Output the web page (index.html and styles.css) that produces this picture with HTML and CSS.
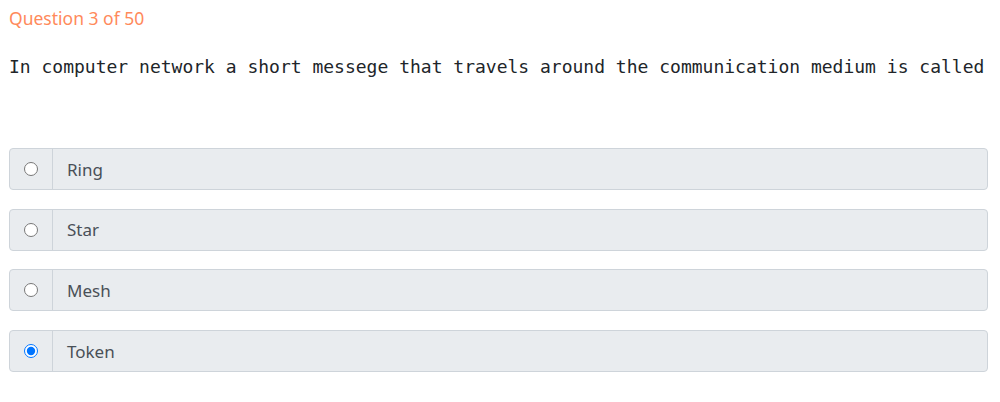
FILE: index.html
```html
<!DOCTYPE html>
<html>
<head>
<meta charset="utf-8">
<link rel="stylesheet" href="styles.css">
</head>
<body>
<div class="quiz">
  <div class="counter">Question 3 of 50</div>
  <pre class="question">In computer network a short messege that travels around the communication medium is called</pre>
  <div class="options">
    <label class="option">
      <span class="radio-cell"><input type="radio" name="q3"></span>
      <span class="label">Ring</span>
    </label>
    <label class="option">
      <span class="radio-cell"><input type="radio" name="q3"></span>
      <span class="label">Star</span>
    </label>
    <label class="option">
      <span class="radio-cell"><input type="radio" name="q3"></span>
      <span class="label">Mesh</span>
    </label>
    <label class="option">
      <span class="radio-cell"><input type="radio" name="q3" checked></span>
      <span class="label">Token</span>
    </label>
  </div>
</div>
</body>
</html>
```
FILE: styles.css
```css
html, body {
  margin: 0;
  padding: 0;
  background: #fff;
}
.quiz {
  padding: 6px 12px 0 9px;
  font-family: "Noto Sans", "Open Sans", sans-serif;
}
.counter {
  color: #ff8a5b;
  font-size: 17.5px;
  line-height: 24px;
}
.question {
  margin: 25px 0 0 0;
  font-family: "DejaVu Sans Mono", monospace;
  font-size: 18px;
  line-height: 24px;
  color: #212529;
}
.options {
  margin-top: 69px;
  display: flex;
  flex-direction: column;
  gap: 18.7px;
}
.option {
  display: flex;
  height: 42px;
  box-sizing: border-box;
  border: 1px solid #ced4da;
  border-radius: 4px;
  background: #e9ecef;
  overflow: hidden;
}
.radio-cell {
  width: 42px;
  flex: none;
  display: flex;
  align-items: center;
  justify-content: center;
  border-right: 1px solid #ced4da;
}
.radio-cell input {
  margin: 0;
  width: 14px;
  height: 14px;
}
.label {
  display: flex;
  align-items: center;
  padding-left: 14px;
  color: #495057;
  font-size: 17px;
}
```
